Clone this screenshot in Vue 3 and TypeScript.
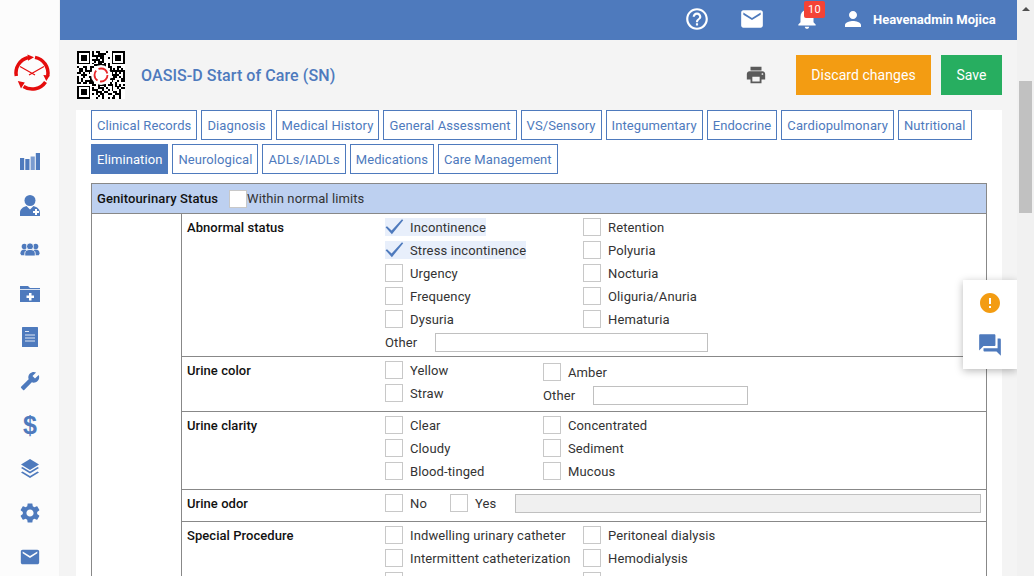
<script setup lang="ts">
interface Opt { label: string; checked?: boolean }

const firstRowTabs = ['Clinical Records', 'Diagnosis', 'Medical History', 'General Assessment', 'VS/Sensory', 'Integumentary', 'Endocrine', 'Cardiopulmonary', 'Nutritional']
const secondRowTabs = ['Elimination', 'Neurological', 'ADLs/IADLs', 'Medications', 'Care Management']

const abnormal: Opt[] = [
  { label: 'Incontinence', checked: true }, { label: 'Retention' },
  { label: 'Stress incontinence', checked: true }, { label: 'Polyuria' },
  { label: 'Urgency' }, { label: 'Nocturia' },
  { label: 'Frequency' }, { label: 'Oliguria/Anuria' },
  { label: 'Dysuria' }, { label: 'Hematuria' },
]
const clarity: Opt[] = [
  { label: 'Clear' }, { label: 'Concentrated' },
  { label: 'Cloudy' }, { label: 'Sediment' },
  { label: 'Blood-tinged' }, { label: 'Mucous' },
]
const special: Opt[] = [
  { label: 'Indwelling urinary catheter' }, { label: 'Peritoneal dialysis' },
  { label: 'Intermittent catheterization' }, { label: 'Hemodialysis' },
]

// QR-like module pattern
const N = 25
const cell = 48 / N
const modules: { x: number; y: number }[] = []
let seed = 1987
function next(): number {
  seed = (seed * 1103515245 + 12345) & 0x7fffffff
  return (seed >> 16) & 1
}
for (let y = 0; y < N; y++) {
  for (let x = 0; x < N; x++) {
    const inTL = x < 8 && y < 8
    const inTR = x >= N - 8 && y < 8
    const inBL = x < 8 && y >= N - 8
    const v = next()
    if (!inTL && !inTR && !inBL && v) modules.push({ x: x * cell, y: y * cell })
  }
}
const finders = [
  { x: 0, y: 0 },
  { x: (N - 7) * cell, y: 0 },
  { x: 0, y: (N - 7) * cell },
]
</script>

<template>
  <div class="page">
    <aside class="sidebar">
      <div class="logo">
        <svg width="36" height="36" viewBox="0 0 36 36" fill="none">
          <g stroke="#e50c0c" stroke-width="3.500" fill="none">
            <path d="M21 2.400A16 16 0 0 1 33.700 21" />
            <path d="M31.500 27A16 16 0 0 1 9.500 31.500" />
            <path d="M2.300 21A16 16 0 0 1 14 2.500" />
          </g>
          <path d="M13.500 -0.500l6.500 2.800-6 3.500zM35.800 20.500l-3.500 5.500-3-6zM3.800 26l7 1.500-3.800 6z" fill="#e50c0c" />
          <path d="M6 11.500L21 20M30 11.500L15 20" stroke="#e50c0c" stroke-width="1.200" />
        </svg>
      </div>
      <nav class="side-icons">
        <span class="side-icon">
          <svg width="20" height="17" viewBox="0 0 20 17"><rect x="0" y="5" width="4.200" height="12" fill="#4e7abd" /><rect x="5.300" y="6" width="4.200" height="11" fill="#4e7abd" /><rect x="10.600" y="3.500" width="4.200" height="13.500" fill="#7b9cd0" /><rect x="15.800" y="0" width="4.200" height="17" fill="#4e7abd" /></svg>
        </span>
        <span class="side-icon">
          <svg width="20" height="21" viewBox="0 0 20 21">
            <circle cx="10" cy="5.500" r="5.500" fill="#4e7abd" />
            <path d="M0 21v-3c0-4 3-6 6.500-7l3.500 3.500 3.500-3.500c3.500 1 6.500 3 6.500 7v3z" fill="#4e7abd" />
            <path d="M15 14h2v2h2v2h-2v2h-2v-2h-2v-2h2z" fill="#fff" />
          </svg>
        </span>
        <span class="side-icon">
          <svg width="20" height="14" viewBox="0 0 22 16" fill="#4e7abd">
            <circle cx="4.500" cy="5" r="3" />
            <circle cx="17.500" cy="5" r="3" />
            <path d="M0 13c0-3 2-4.500 4.500-4.500S9 10 9 13v2H1z" />
            <path d="M13 13c0-3 2-4.500 4.500-4.500S22 10 22 13l-1 2h-8z" />
            <circle cx="11" cy="5" r="4" stroke="#fcfcfc" stroke-width="1" />
            <path d="M5 16v-3c0-3 3-4.500 6-4.500s6 1.500 6 4.500v3z" stroke="#fcfcfc" stroke-width="1" />
          </svg>
        </span>
        <span class="side-icon">
          <svg width="20" height="17" viewBox="0 0 20 17">
            <path d="M0 1h8l2 2h10v14H0z" fill="#4e7abd" />
            <path d="M0 4.500h20" stroke="#fcfcfc" stroke-width="0.800" />
            <path d="M9 8h2.500v2.500H14V13h-2.500v2.500H9V13H6.500v-2.500H9z" fill="#fff" />
          </svg>
        </span>
        <span class="side-icon">
          <svg width="16" height="20" viewBox="0 0 16 20">
            <rect width="16" height="20" rx="0.500" fill="#4e7abd" />
            <path d="M3 4.500h4M3 8h10M3 11h10M3 14h10" stroke="#dfe7f4" stroke-width="1" />
          </svg>
        </span>
        <span class="side-icon">
          <svg class="flip" width="20" height="20" viewBox="0 0 24 24"><path d="M22.700 19l-9.100-9.100c.9-2.300.4-5-1.500-6.900-2-2-5-2.400-7.400-1.300L9 6 6 9 1.600 4.700C.4 7.100.9 10.100 2.900 12.100c1.900 1.900 4.600 2.400 6.900 1.500l9.100 9.100c.4.4 1 .4 1.400 0l2.300-2.300c.5-.4.5-1.100.1-1.400z" fill="#4e7abd" /></svg>
        </span>
        <span class="side-icon dollar">$</span>
        <span class="side-icon">
          <svg width="20" height="20" viewBox="0 0 20 20" fill="#4e7abd">
            <path d="M10 0l9 5.500-9 5.500-9-5.500z" />
            <path d="M2.500 8L10 12.600 17.500 8 19 9l-9 5.500L1 9z" />
            <path d="M2.500 12.500L10 17.100l7.500-4.600 1.500 1-9 5.500-9-5.500z" />
          </svg>
        </span>
        <span class="side-icon">
          <svg width="24" height="24" viewBox="0 0 24 24"><path d="M19.140 12.940c.04-.3.06-.61.06-.94 0-.32-.02-.64-.07-.94l2.030-1.580c.18-.14.23-.41.12-.61l-1.920-3.320c-.12-.22-.37-.29-.59-.22l-2.390.96c-.5-.38-1.030-.7-1.620-.94l-.36-2.540c-.04-.24-.24-.41-.48-.41h-3.840c-.24 0-.43.17-.47.41l-.36 2.540c-.59.24-1.130.57-1.620.94l-2.390-.96c-.22-.08-.47 0-.59.22L2.740 8.870c-.12.21-.08.47.12.61l2.030 1.580c-.05.3-.09.63-.09.94s.02.64.07.94l-2.030 1.580c-.18.14-.23.41-.12.61l1.920 3.320c.12.22.37.29.59.22l2.390-.96c.5.38 1.030.7 1.620.94l.36 2.540c.05.24.24.41.48.41h3.840c.24 0 .44-.17.47-.41l.36-2.540c.59-.24 1.130-.56 1.620-.94l2.390.96c.22.08.47 0 .59-.22l1.920-3.320c.12-.22.07-.47-.12-.61l-2.010-1.580zM12 15.600c-1.980 0-3.600-1.620-3.600-3.600s1.620-3.600 3.600-3.600 3.600 1.620 3.600 3.600-1.620 3.600-3.600 3.600z" fill="#4e7abd" /></svg>
        </span>
        <span class="side-icon">
          <svg width="22" height="22" viewBox="0 0 24 24"><path d="M20 4H4c-1.100 0-1.990.9-1.990 2L2 18c0 1.100.9 2 2 2h16c1.100 0 2-.9 2-2V6c0-1.100-.9-2-2-2zm0 4l-8 5-8-5V6l8 5 8-5v2z" fill="#4e7abd" /></svg>
        </span>
      </nav>
    </aside>

    <div class="main">
      <header class="topbar">
        <svg class="top-help" width="26" height="26" viewBox="0 0 24 24"><path d="M11 18h2v-2h-2v2zm1-16C6.480 2 2 6.480 2 12s4.480 10 10 10 10-4.480 10-10S17.520 2 12 2zm0 18c-4.410 0-8-3.590-8-8s3.590-8 8-8 8 3.590 8 8-3.590 8-8 8zm0-14c-2.210 0-4 1.790-4 4h2c0-1.100.9-2 2-2s2 .9 2 2c0 2-3 1.750-3 5h2c0-2.250 3-2.500 3-5 0-2.210-1.790-4-4-4z" fill="#fff" /></svg>
        <svg class="top-mail" width="26" height="26" viewBox="0 0 24 24"><path d="M20 4H4c-1.100 0-1.990.9-1.990 2L2 18c0 1.100.9 2 2 2h16c1.100 0 2-.9 2-2V6c0-1.100-.9-2-2-2zm0 4l-8 5-8-5V6l8 5 8-5v2z" fill="#fff" /></svg>
        <span class="bell">
          <svg width="26" height="26" viewBox="0 0 24 24"><path d="M12 22c1.100 0 2-.9 2-2h-4c0 1.100.89 2 2 2zm6-6v-5c0-3.070-1.640-5.640-4.500-6.320V4c0-.83-.67-1.500-1.500-1.500s-1.500.67-1.500 1.500v.68C7.630 5.360 6 7.920 6 11v5l-2 2v1h16v-1l-2-2z" fill="#fff" /></svg>
          <span class="badge">10</span>
        </span>
        <svg class="top-person" width="24" height="24" viewBox="0 0 24 24"><path d="M12 12c2.210 0 4-1.790 4-4s-1.790-4-4-4-4 1.790-4 4 1.790 4 4 4zm0 2c-2.670 0-8 1.340-8 4v2h16v-2c0-2.660-5.330-4-8-4z" fill="#fff" /></svg>
        <span class="username">Heavenadmin Mojica</span>
      </header>

      <div class="titlebar">
        <svg class="qr" width="48" height="48" viewBox="0 0 48 48" shape-rendering="crispEdges">
          <rect width="48" height="48" fill="#fff" />
          <rect v-for="(m, i) in modules" :key="i" :x="m.x" :y="m.y" :width="cell" :height="cell" fill="#000" />
          <g v-for="(f, i) in finders" :key="'f' + i">
            <rect :x="f.x" :y="f.y" :width="cell * 7" :height="cell * 7" fill="#000" />
            <rect :x="f.x + cell" :y="f.y + cell" :width="cell * 5" :height="cell * 5" fill="#fff" />
            <rect :x="f.x + cell * 2" :y="f.y + cell * 2" :width="cell * 3" :height="cell * 3" fill="#000" />
          </g>
          <g shape-rendering="auto">
            <circle cx="24" cy="24" r="10" fill="#fff" />
            <circle cx="24" cy="24" r="6.500" fill="none" stroke="#e8282b" stroke-width="1.800" stroke-dasharray="11 2.600" />
          </g>
        </svg>
        <h1 class="title">OASIS-D Start of Care (SN)</h1>
        <svg class="print" width="22" height="22" viewBox="0 0 24 24"><path d="M19 8H5c-1.660 0-3 1.340-3 3v6h4v4h12v-4h4v-6c0-1.660-1.340-3-3-3zm-3 11H8v-5h8v5zm3-7c-.55 0-1-.45-1-1s.45-1 1-1 1 .45 1 1-.45 1-1 1zm-1-9H6v4h12V3z" fill="#5a5a5a" /></svg>
        <button class="btn discard" type="button">Discard changes</button>
        <button class="btn save" type="button">Save</button>
      </div>

      <section class="card">
        <div class="tabs">
          <a v-for="t in firstRowTabs" :key="t" class="tab">{{ t }}</a>
        </div>
        <div class="tabs second">
          <a v-for="t in secondRowTabs" :key="t" class="tab" :class="{ active: t === 'Elimination' }">{{ t }}</a>
        </div>

        <div class="table">
          <div class="table-head">
            <strong class="head-title">Genitourinary Status</strong>
            <span class="box head-box"></span>
            <span class="text head-text">Within normal limits</span>
          </div>
          <div class="table-body">
            <div class="gutter"></div>
            <div class="rows">
              <div class="row">
                <div class="row-label">Abnormal status</div>
                <div class="row-content">
                  <div class="opts wide">
                    <label v-for="o in abnormal" :key="o.label" class="opt" :class="{ on: o.checked }">
                      <svg v-if="o.checked" class="tick" width="19" height="18" viewBox="0 0 19 18"><path d="M0.600 9.300L2 8.300 6.600 12.600 17 1.200 18.200 2.300 6.900 16.200z" fill="#4e7abd" /></svg>
                      <span v-else class="box"></span>
                      <span class="text">{{ o.label }}</span>
                    </label>
                  </div>
                  <div class="other-line">
                    <span class="text other-label">Other</span>
                    <input class="field other-a" type="text" />
                  </div>
                </div>
              </div>

              <div class="row">
                <div class="row-label">Urine color</div>
                <div class="row-content split">
                  <div class="stack">
                    <label class="opt"><span class="box"></span><span class="text">Yellow</span></label>
                    <label class="opt"><span class="box"></span><span class="text">Straw</span></label>
                  </div>
                  <div class="stack shifted">
                    <label class="opt"><span class="box"></span><span class="text">Amber</span></label>
                    <div class="other-line">
                      <span class="text other-label">Other</span>
                      <input class="field other-b" type="text" />
                    </div>
                  </div>
                </div>
              </div>

              <div class="row">
                <div class="row-label">Urine clarity</div>
                <div class="row-content">
                  <div class="opts narrow">
                    <label v-for="o in clarity" :key="o.label" class="opt"><span class="box"></span><span class="text">{{ o.label }}</span></label>
                  </div>
                </div>
              </div>

              <div class="row">
                <div class="row-label">Urine odor</div>
                <div class="row-content inline">
                  <label class="opt"><span class="box"></span><span class="text">No</span></label>
                  <label class="opt"><span class="box"></span><span class="text">Yes</span></label>
                  <input class="field odor" type="text" disabled />
                </div>
              </div>

              <div class="row">
                <div class="row-label">Special Procedure</div>
                <div class="row-content">
                  <div class="opts wide">
                    <label v-for="o in special" :key="o.label" class="opt"><span class="box"></span><span class="text">{{ o.label }}</span></label>
                    <span class="box"></span>
                    <span class="box"></span>
                  </div>
                </div>
              </div>
            </div>
          </div>
        </div>
      </section>

      <div class="float-panel">
        <svg width="24" height="24" viewBox="0 0 24 24"><path d="M12 2C6.480 2 2 6.480 2 12s4.480 10 10 10 10-4.480 10-10S17.520 2 12 2zm1 15h-2v-2h2v2zm0-4h-2V7h2v6z" fill="#f39c12" /></svg>
        <svg width="26" height="26" viewBox="0 0 24 24"><path d="M21 6h-2v9H6v2c0 .55.45 1 1 1h11l4 4V7c0-.55-.45-1-1-1zm-4 6V3c0-.55-.45-1-1-1H3c-.55 0-1 .45-1 1v14l4-4h10c.55 0 1-.45 1-1z" fill="#4e7abd" /></svg>
      </div>
    </div>

    <div class="scrollbar">
      <span class="arrow"></span>
      <span class="thumb"></span>
    </div>
  </div>
</template>

<style>
html, body { margin: 0; padding: 0; overflow: hidden; background: #f4f4f4; }
</style>

<style scoped>
.page {
  display: flex;
  width: 1034px;
  height: 576px;
  overflow: hidden;
  font-family: Roboto, "Liberation Sans", sans-serif;
  font-size: 13px;
  color: #333;
}
.sidebar {
  width: 60px;
  flex: none;
  background: #fcfcfc;
  box-shadow: inset -1px 0 0 #f3f3f3;
  box-sizing: border-box;
  padding-top: 55px;
}
.logo { display: flex; justify-content: center; padding-left: 3px; height: 84px; }
.logo svg { display: block; overflow: visible; }
.side-icons { display: flex; flex-direction: column; align-items: center; }
.side-icon { height: 44px; width: 100%; display: flex; align-items: center; justify-content: center; flex: none; }
.flip { transform: scaleX(-1); }
.dollar {
  font-family: "Liberation Sans", sans-serif;
  font-weight: 700;
  font-size: 25px;
  color: #4e7abd;
}
.main { position: relative; width: 957px; flex: none; background: #f4f4f4; }
.topbar {
  height: 40px;
  background: #4e7abd;
  display: flex;
  align-items: center;
  padding: 0 0 2px 624px;
  box-sizing: border-box;
}
.topbar svg { display: block; flex: none; }
.top-mail { margin-left: 29px; }
.bell { position: relative; margin-left: 29px; display: block; width: 26px; height: 26px; top: -1px; }
.badge {
  position: absolute;
  left: 10px;
  top: -4px;
  width: 21px;
  height: 17px;
  background: #f44336;
  border-radius: 2px;
  color: #fff;
  font-size: 11px;
  line-height: 17px;
  text-align: center;
  letter-spacing: .4px;
}
.top-person { margin-left: 21px; }
.username { margin-left: 8px; color: #fff; font-weight: 700; font-size: 13px; }
.titlebar {
  height: 70px;
  display: flex;
  align-items: center;
  padding: 0 15px 0 17px;
  box-sizing: border-box;
}
.qr { flex: none; display: block; margin-top: -1px; }
.title {
  margin: 0 0 0 16px;
  flex: 1;
  font-size: 16px;
  font-weight: 500;
  color: #4e7abd;
  letter-spacing: .08px;
}
.print { margin-right: 29px; }
.btn {
  height: 40px;
  border: 0;
  color: #fff;
  font-family: inherit;
  font-size: 14px;
  letter-spacing: .05px;
  padding: 0;
  margin: 0;
}
.discard { width: 135px; background: #f39c12; margin-right: 10px; }
.save { width: 61px; background: #27ae60; }
.card {
  margin-left: 16px;
  width: 926px;
  height: 466px;
  box-sizing: border-box;
  background: #fff;
  padding-left: 15px;
  overflow: hidden;
}
.tabs { display: flex; gap: 4px; }
.tabs.second { margin-top: 4px; }
.tab {
  height: 30px;
  line-height: 30px;
  box-sizing: border-box;
  border: 1px solid #4e7abd;
  padding: 0 5px;
  color: #4e7abd;
  letter-spacing: .1px;
  white-space: nowrap;
}
.second .tab { letter-spacing: .08px; }
.tab.active { background: #4e7abd; color: #fff; }
.table {
  margin-top: 9px;
  width: 896px;
  box-sizing: border-box;
  border: 1px solid #888;
  border-bottom: 0;
}
.table-head {
  height: 29px;
  background: #bdd0f0;
  border-bottom: 1px solid #888;
  display: flex;
  align-items: center;
  padding-left: 5px;
}
.head-title { font-weight: 500; color: #111; width: 132px; flex: none; letter-spacing: .1px; }
.table-body { display: flex; }
.gutter { width: 89px; flex: none; border-right: 1px solid #888; }
.rows { flex: 1; min-width: 0; }
.row {
  display: flex;
  border-bottom: 1px solid #888;
  padding: 4px 0;
}
.row-label {
  width: 198px;
  flex: none;
  padding-left: 5px;
  font-weight: 500;
  color: #111;
  line-height: 20px;
  height: 18px;
  letter-spacing: .05px;
}
.row-content { flex: 1; min-width: 0; }
.opts { display: grid; row-gap: 5px; justify-items: start; margin-bottom: 5px; }
.opts.wide { grid-template-columns: 198px 1fr; }
.opts.narrow { grid-template-columns: 158px 1fr; }
.opt { display: inline-flex; align-items: flex-start; height: 18px; }
.opt.on { background: #e8effb; }
.box {
  display: block;
  width: 18px;
  height: 18px;
  box-sizing: border-box;
  border: 1px solid #c8c8c8;
  flex: none;
  margin-right: 7px;
}
.table-head .head-box { background: #fff; margin-right: 0; }
.tick { width: 19px; height: 18px; margin-right: 6px; flex: none; display: block; }
.text { letter-spacing: .12px; line-height: 20px; height: 18px; white-space: nowrap; }
.table-head .head-text { line-height: 18px; letter-spacing: .1px; }
.other-line { display: flex; align-items: center; height: 19px; }
.other-line .other-label { width: 50px; flex: none; line-height: 18px; }
.field {
  height: 19px;
  box-sizing: border-box;
  border: 1px solid #c0c0c0;
  background: #fff;
  padding: 0;
  margin: 0;
  display: block;
}
.other-a { width: 273px; }
.other-b { width: 155px; }
.split { display: flex; }
.stack { display: flex; flex-direction: column; gap: 5px; align-items: flex-start; padding-bottom: 5px; }
.stack:first-child { width: 158px; flex: none; }
.shifted { padding-top: 2px; padding-bottom: 0; }
.inline { display: grid; grid-template-columns: 65px 65px 466px; height: 23px; align-items: start; }
.odor { width: 466px; background: #f0f0f0; }
.float-panel {
  position: absolute;
  left: 903px;
  top: 280px;
  width: 54px;
  height: 89px;
  background: #fff;
  box-shadow: 0 2px 8px rgba(0, 0, 0, .28);
  display: flex;
  flex-direction: column;
  align-items: center;
  gap: 17px;
  padding-top: 11px;
  box-sizing: border-box;
}
.float-panel svg { display: block; flex: none; }
.scrollbar { position: relative; width: 17px; flex: none; background: #f1f1f1; }
.arrow {
  position: absolute;
  left: 5px;
  top: 7px;
  border-left: 4px solid transparent;
  border-right: 4px solid transparent;
  border-bottom: 4px solid #505050;
}
.thumb {
  position: absolute;
  left: 2px;
  top: 81px;
  width: 13px;
  height: 132px;
  background: #c1c1c1;
}
</style>
